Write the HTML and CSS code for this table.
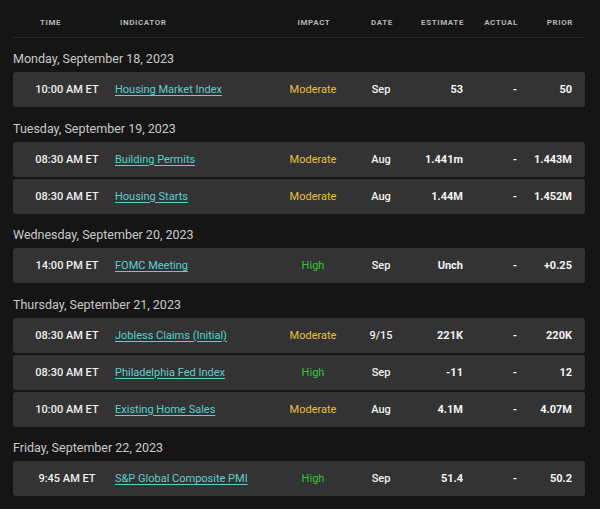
FILE: index.html
```html
<!DOCTYPE html>
<html>
<head>
<meta charset="utf-8">
<link rel="stylesheet" href="styles.css">
</head>
<body>
<div class="cal">
  <div class="head grid">
    <div class="h-time">Time</div>
    <div class="h-ind">Indicator</div>
    <div class="h-imp">Impact</div>
    <div class="h-date">Date</div>
    <div class="h-num">Estimate</div>
    <div class="h-num">Actual</div>
    <div class="h-num">Prior</div>
  </div>

  <div class="group">
    <div class="day">Monday, September 18, 2023</div>
    <div class="row grid">
      <div class="time">10:00 AM ET</div>
      <div class="ind"><a href="#">Housing Market Index</a></div>
      <div class="imp mod">Moderate</div>
      <div class="date">Sep</div>
      <div class="num">53</div>
      <div class="num">-</div>
      <div class="num">50</div>
    </div>
  </div>

  <div class="group">
    <div class="day">Tuesday, September 19, 2023</div>
    <div class="row grid">
      <div class="time">08:30 AM ET</div>
      <div class="ind"><a href="#">Building Permits</a></div>
      <div class="imp mod">Moderate</div>
      <div class="date">Aug</div>
      <div class="num">1.441m</div>
      <div class="num">-</div>
      <div class="num">1.443M</div>
    </div>
    <div class="row grid">
      <div class="time">08:30 AM ET</div>
      <div class="ind"><a href="#">Housing Starts</a></div>
      <div class="imp mod">Moderate</div>
      <div class="date">Aug</div>
      <div class="num">1.44M</div>
      <div class="num">-</div>
      <div class="num">1.452M</div>
    </div>
  </div>

  <div class="group">
    <div class="day">Wednesday, September 20, 2023</div>
    <div class="row grid">
      <div class="time">14:00 PM ET</div>
      <div class="ind"><a href="#">FOMC Meeting</a></div>
      <div class="imp high">High</div>
      <div class="date">Sep</div>
      <div class="num">Unch</div>
      <div class="num">-</div>
      <div class="num">+0.25</div>
    </div>
  </div>

  <div class="group">
    <div class="day">Thursday, September 21, 2023</div>
    <div class="row grid">
      <div class="time">08:30 AM ET</div>
      <div class="ind"><a href="#">Jobless Claims (Initial)</a></div>
      <div class="imp mod">Moderate</div>
      <div class="date">9/15</div>
      <div class="num">221K</div>
      <div class="num">-</div>
      <div class="num">220K</div>
    </div>
    <div class="row grid">
      <div class="time">08:30 AM ET</div>
      <div class="ind"><a href="#">Philadelphia Fed Index</a></div>
      <div class="imp high">High</div>
      <div class="date">Sep</div>
      <div class="num">-11</div>
      <div class="num">-</div>
      <div class="num">12</div>
    </div>
    <div class="row grid">
      <div class="time">10:00 AM ET</div>
      <div class="ind"><a href="#">Existing Home Sales</a></div>
      <div class="imp mod">Moderate</div>
      <div class="date">Aug</div>
      <div class="num">4.1M</div>
      <div class="num">-</div>
      <div class="num">4.07M</div>
    </div>
  </div>

  <div class="group">
    <div class="day">Friday, September 22, 2023</div>
    <div class="row grid">
      <div class="time">9:45 AM ET</div>
      <div class="ind"><a href="#">S&amp;P Global Composite PMI</a></div>
      <div class="imp high">High</div>
      <div class="date">Sep</div>
      <div class="num">51.4</div>
      <div class="num">-</div>
      <div class="num">50.2</div>
    </div>
  </div>
</div>
</body>
</html>
```

FILE: styles.css
```css
* { box-sizing: border-box; }
html, body { margin: 0; padding: 0; }
body {
  background: #151515;
  font-family: Roboto, "Noto Sans", Arial, sans-serif;
  color: #eeeeee;
  width: 600px;
  height: 509px;
  overflow: hidden;
}
.cal {
  padding: 0 15px 0 13px;
}
.grid {
  display: grid;
  grid-template-columns: 102px 160px 76px 60px 52px 54px 55px;
  padding-right: 13px;
  align-items: center;
}
.head {
  height: 37.5px;
  border-bottom: 1px solid #2b2b2b;
  font-size: 8px;
  font-weight: 700;
  letter-spacing: 0.6px;
  text-transform: uppercase;
  color: #b4b4b4;
  padding-top: 8px;
}
.h-time { padding-left: 27px; }
.h-ind { padding-left: 5px; }
.h-imp { text-align: center; padding-left: 2px; }
.h-date { text-align: center; padding-left: 2px; }
.h-num { text-align: right; margin-right: -1px; }

.group {
  display: flex;
  flex-direction: column;
  gap: 2px;
}
.day {
  margin-top: 12.5px;
  margin-bottom: 3px;
  height: 17px;
  line-height: 17px;
  font-size: 12.5px;
  color: #c9c9c9;
}
.row {
  height: 35px;
  background: #333333;
  border-radius: 3px;
  font-size: 11px;
}
.time {
  padding-left: 6px;
  text-align: center;
  font-weight: 500;
  color: #f0f0f0;
}
.ind a {
  color: #5ccfcf;
  text-decoration: underline;
  text-underline-offset: 2px;
}
.imp { text-align: center; }
.mod { color: #e9c13b; }
.high { color: #36c436; }
.date { text-align: center; font-weight: 500; color: #f0f0f0; }
.num { text-align: right; font-weight: 700; color: #f4f4f4; }
```
